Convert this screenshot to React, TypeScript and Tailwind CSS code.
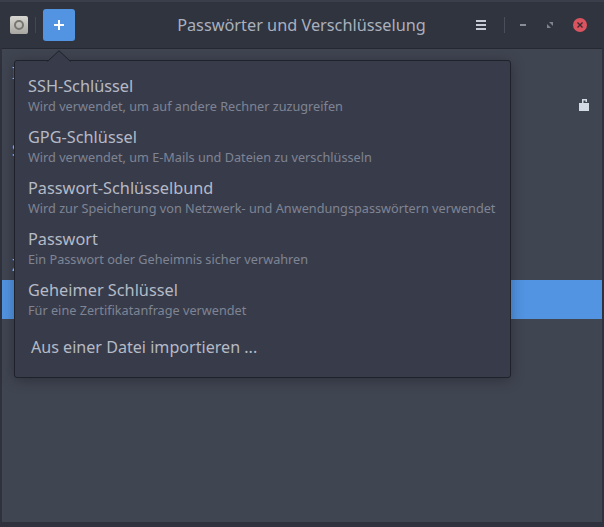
const ITEMS = [
  { title: "SSH-Schlüssel", sub: "Wird verwendet, um auf andere Rechner zuzugreifen" },
  { title: "GPG-Schlüssel", sub: "Wird verwendet, um E-Mails und Dateien zu verschlüsseln" },
  { title: "Passwort-Schlüsselbund", sub: "Wird zur Speicherung von Netzwerk- und Anwendungspasswörtern verwendet" },
  { title: "Passwort", sub: "Ein Passwort oder Geheimnis sicher verwahren" },
  { title: "Geheimer Schlüssel", sub: "Für eine Zertifikatanfrage verwendet" },
];

function Popover() {
  return (
    <div className="absolute left-[14px] top-[60px] w-[497px] h-[318px] rounded-[3px] border border-[#1f222b] bg-[#383c4a] shadow-[0_2px_14px_rgba(0,0,0,0.3)]">
      <svg className="absolute left-[32px] top-[-11px]" width="24" height="12" viewBox="0 0 24 12">
        <path d="M0.5 11.5 L12 0.7 L23.5 11.5" fill="#383c4a" stroke="#1f222b" />
      </svg>
      <div className="pt-[15px] pl-[13px]">
        {ITEMS.map((it) => (
          <div key={it.title} className="h-[51px]">
            <div className="text-[16.3px] leading-[20px] text-[#b5bac6]">{it.title}</div>
            <div className="mt-[1px] text-[12.7px] leading-[19px] text-[#7f8494]">{it.sub}</div>
          </div>
        ))}
        <div className="pl-[3px] pt-[6px] text-[16.1px] leading-[20px] text-[#b5bac6]">Aus einer Datei importieren ...</div>
      </div>
    </div>
  );
}

export default function App() {
  return (
    <div className="relative w-[604px] h-[527px] overflow-hidden bg-[#2f323d] font-['Noto_Sans',sans-serif]">
      {/* header */}
      <div className="flex h-[48px] items-center border-t-2 border-[#3a3e4b] bg-[#2f343f]">
        <div className="ml-[10px] flex h-[18px] w-[18px] items-center justify-center rounded-[2px] bg-gradient-to-b from-[#d8d6d1] to-[#a9a7a2]">
          <div className="h-[10px] w-[10px] rounded-full border-2 border-[#77766f]" />
        </div>
        <div className="ml-[7px] h-[16px] w-px bg-[#434753]" />
        <div className="ml-[7px] flex h-[32px] w-[32px] items-center justify-center rounded-[3px] bg-[#5294e2]">
          <svg width="12" height="12" viewBox="0 0 12 12"><path d="M5 1h2v4h4v2H7v4H5V7H1V5h4z" fill="#fff" /></svg>
        </div>
        <div className="ml-[92px] w-[269px] text-center text-[16.3px] text-[#aab0bd]">Passwörter und Verschlüsselung</div>
        <svg className="ml-[40px]" width="10" height="10" viewBox="0 0 10 10"><path d="M0 0h10v2H0zM0 4h10v2H0zM0 8h10v2H0z" fill="#c6cbd6" /></svg>
        <div className="ml-[18px] h-[16px] w-px bg-[#4a4e5a]" />
        <div className="ml-[15px] h-[2px] w-[6px] bg-[#888d99]" />
        <svg className="ml-[21px]" width="6" height="6" viewBox="0 0 6 6"><path d="M2 0H6V4zM0 2L4 6H0z" fill="#7e838f" /></svg>
        <div className="ml-[20px] flex h-[14px] w-[14px] items-center justify-center rounded-full bg-[#d9545f]">
          <svg width="6" height="6" viewBox="0 0 6 6"><path d="M0.5 0.5l5 5M5.5 0.5l-5 5" stroke="#3a2b33" strokeWidth="1.4" /></svg>
        </div>
      </div>
      {/* body */}
      <div className="relative mx-[2px] mb-[3px] h-[474px] border-t border-[#262931] bg-[#404552] text-[16px] text-[#c4c9d4]">
        <div className="pl-[10px] pt-[14px] h-[89px] leading-[20px]">I</div>
        <div className="pl-[10px] pt-[2px] h-[115px] leading-[20px]">S</div>
        <div className="pl-[10px] pt-[2px] h-[27px] leading-[20px]">Z</div>
        <div className="h-[39px] bg-[#5294e2]" />
        <svg className="absolute right-[13px] top-[49px]" width="10" height="13" viewBox="0 0 10 13">
          <path d="M0 5h10v8H0zM3 5V1h5v3H6.500V2.500H4.500V5z" fill="#d3dae3" />
        </svg>
      </div>
      <Popover />
    </div>
  );
}
